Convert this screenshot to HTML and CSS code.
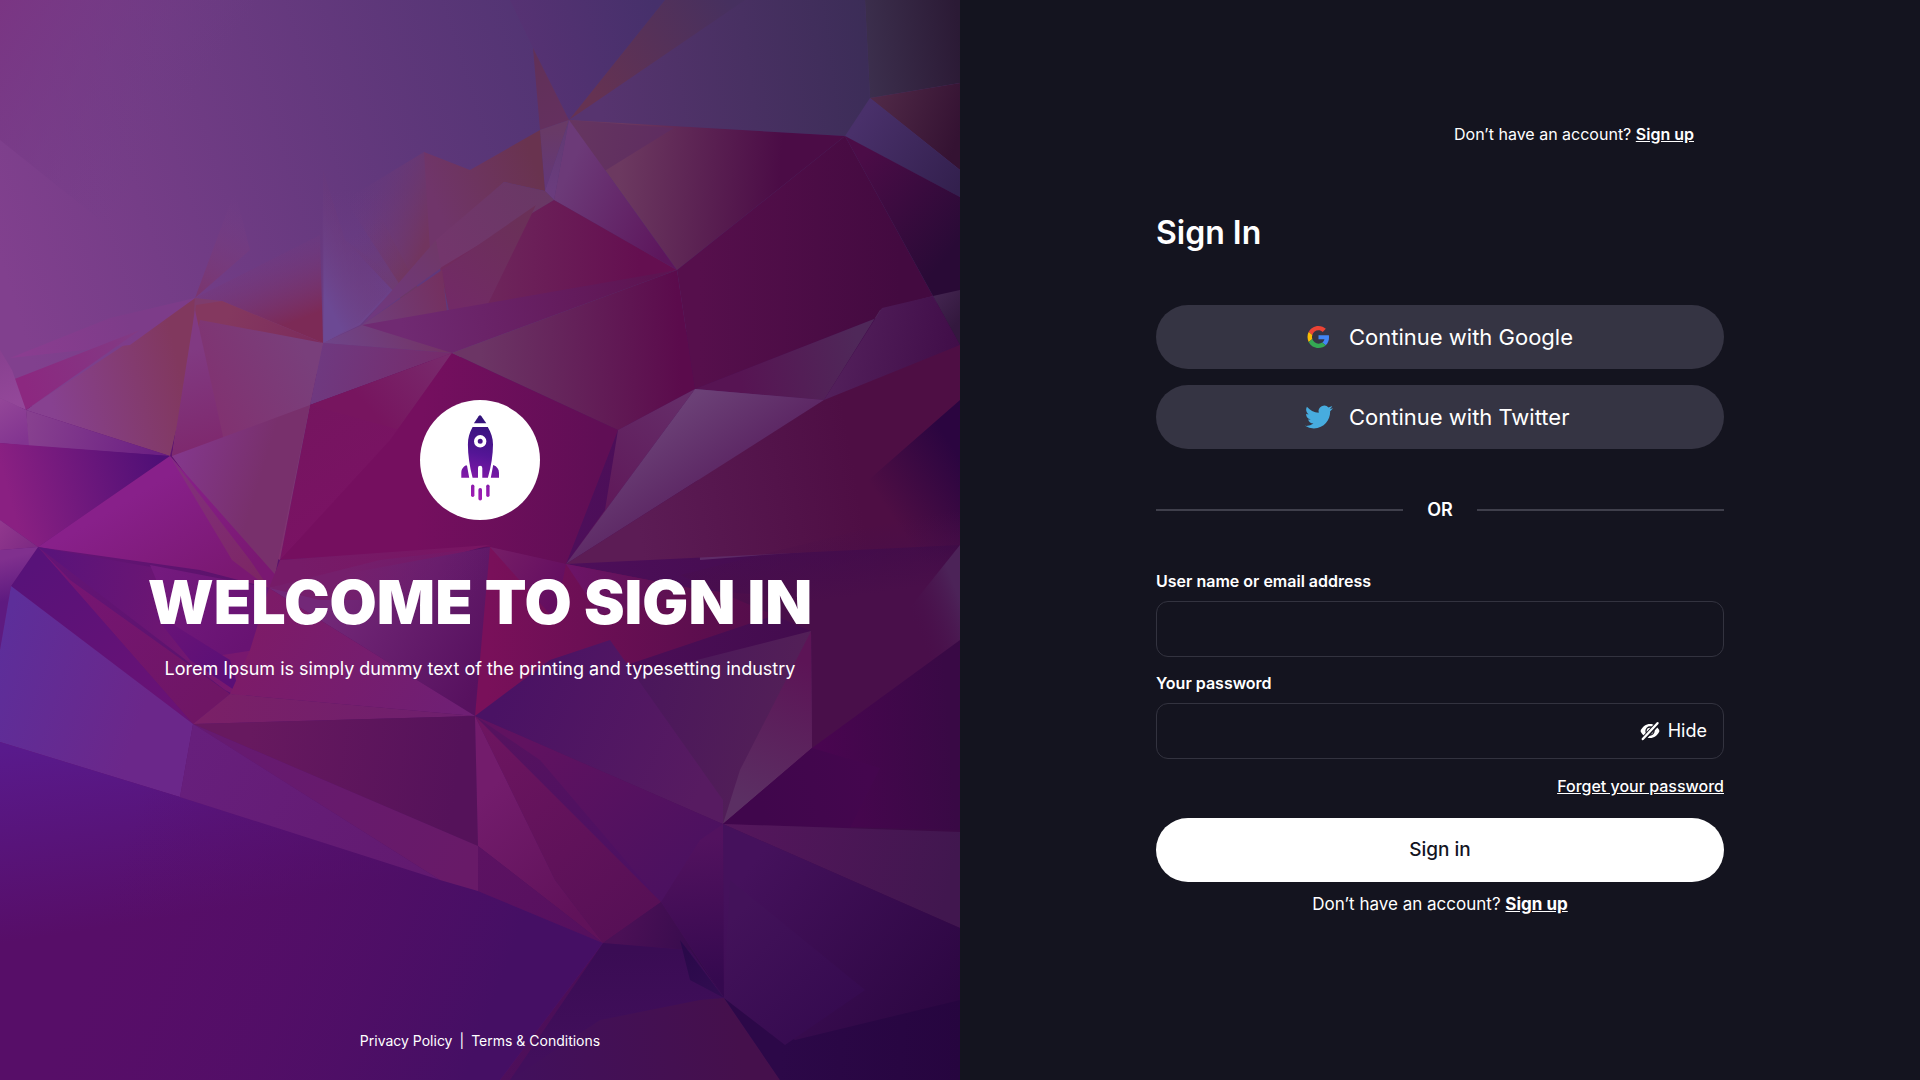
FILE: index.html
```html
<!DOCTYPE html>
<html lang="en">
<head>
  <meta charset="utf-8">
  <meta name="viewport" content="width=device-width, initial-scale=1">
  <title>Sign In</title>
  <link rel="stylesheet" href="styles.css">
</head>
<body>
  <div class="page">
    <section class="welcome">
      <svg class="backdrop" viewBox="0 0 960 1080" preserveAspectRatio="xMidYMid slice" aria-hidden="true"></svg>
      <div class="hero">
        <div class="logo">
          <svg viewBox="0 0 120 120" width="120" height="120" aria-hidden="true">
            <defs>
              <linearGradient id="rocket" gradientUnits="userSpaceOnUse" x1="66" y1="20" x2="50" y2="96">
                <stop offset="0" stop-color="#33127a"/>
                <stop offset=".45" stop-color="#541596"/>
                <stop offset="1" stop-color="#a01cb4"/>
              </linearGradient>
            </defs>
            <g fill="url(#rocket)">
              <path d="M58.600 16.200q1.400-1.800 2.800 0l4.900 7.100H53.900z"/>
              <path fill-rule="evenodd" d="M52.600 27h15.200c3.300 6 5.200 11 5.200 17.500 0 10-1.800 22-5.100 33.200H62.300V68q0-2.200-2.200-2.200T58 68v9.700h-5.400C49.600 66.500 47.900 55 47.900 44.500c0-6.500 1.500-11.500 4.700-17.500zM60.200 35.100a6.200 6.200 0 1 0 0 12.400 6.200 6.200 0 0 0 0-12.400zm0 3.700a2.500 2.500 0 1 1 0 5 2.500 2.500 0 0 1 0-5z"/>
              <path d="M47 65c-4 1.500-5.700 4.200-5.700 8v4.700h7.900L46.900 65zM73.200 65c4 1.500 5.800 4.200 5.800 8v4.700h-8.200z"/>
              <rect x="51" y="84.600" width="3.400" height="12.400" rx="1.700"/>
              <rect x="58.400" y="88" width="3.600" height="12.500" rx="1.800"/>
              <rect x="66.200" y="84.600" width="3.400" height="12.400" rx="1.700"/>
            </g>
          </svg>
        </div>
        <h1>WELCOME TO SIGN IN</h1>
        <p>Lorem Ipsum is simply dummy text of the printing and typesetting industry</p>
      </div>
      <footer class="legal">
        <a href="#privacy">Privacy Policy</a><span>|</span><a href="#terms">Terms &amp; Conditions</a>
      </footer>
    </section>

    <main class="panel">
      <form class="form">
        <p class="top-link">Don’t have an account? <a href="#signup">Sign up</a></p>
        <h2>Sign In</h2>

        <div class="social">
          <button type="button" class="social-button">
            <svg viewBox="0 0 28 28" width="28" height="28" aria-hidden="true">
              <g transform="translate(2.500 3) scale(.458)">
                <path fill="#ea4335" d="M24 9.500c3.540 0 6.710 1.220 9.210 3.600l6.850-6.850C35.900 2.380 30.470 0 24 0 14.620 0 6.510 5.380 2.560 13.220l7.980 6.190C12.430 13.720 17.740 9.500 24 9.500z"/>
                <path fill="#4285f4" d="M46.980 24.550c0-1.570-.15-3.090-.38-4.550H24v9.020h12.940c-.58 2.960-2.260 5.480-4.780 7.180l7.730 6c4.510-4.180 7.090-10.360 7.090-17.650z"/>
                <path fill="#fbbc05" d="M10.530 28.590c-.48-1.450-.76-2.990-.76-4.590s.27-3.140.76-4.590l-7.980-6.190C.92 16.460 0 20.120 0 24c0 3.880.92 7.540 2.560 10.780l7.970-6.190z"/>
                <path fill="#34a853" d="M24 48c6.480 0 11.930-2.130 15.890-5.810l-7.730-6c-2.150 1.450-4.920 2.300-8.160 2.300-6.260 0-11.570-4.220-13.470-9.910l-7.980 6.190C6.510 42.620 14.620 48 24 48z"/>
              </g>
            </svg>
            <span>Continue with Google</span>
          </button>
          <button type="button" class="social-button">
            <svg viewBox="0 0 24 24" width="28" height="28" aria-hidden="true">
              <path fill="#47acdf" d="M23.953 4.570a10 10 0 0 1-2.825.775 4.958 4.958 0 0 0 2.163-2.723c-.951.555-2.005.959-3.127 1.184a4.920 4.920 0 0 0-8.384 4.482C7.690 8.095 4.067 6.130 1.640 3.162a4.822 4.822 0 0 0-.666 2.475c0 1.710.870 3.213 2.188 4.096a4.904 4.904 0 0 1-2.228-.616v.060a4.923 4.923 0 0 0 3.946 4.827 4.996 4.996 0 0 1-2.212.085 4.936 4.936 0 0 0 4.604 3.417 9.867 9.867 0 0 1-6.102 2.105c-.39 0-.779-.023-1.170-.067a13.995 13.995 0 0 0 7.557 2.209c9.053 0 13.998-7.496 13.998-13.985 0-.210 0-.420-.015-.630A9.935 9.935 0 0 0 24 4.590z"/>
            </svg>
            <span>Continue with Twitter</span>
          </button>
        </div>

        <div class="divider"><span>OR</span></div>

        <label for="user">User name or email address</label>
        <input class="field" id="user" name="user" type="text" autocomplete="username">

        <label for="password">Your password</label>
        <div class="field field-group">
          <input id="password" name="password" type="password" autocomplete="current-password">
          <button type="button" class="toggle">
            <svg viewBox="0 0 20 20" width="20" height="20" aria-hidden="true">
              <path fill="#fff" d="M.5 10C2.500 5.200 6 3 10 3s7.500 2.200 9.500 7c-2 4.800-5.500 7-9.500 7S2.500 14.800.5 10z"/>
              <circle cx="10" cy="10" r="4" fill="none" stroke="#14141f" stroke-width="1.300"/>
              <path d="M2.500 18.800 18.300 2" stroke="#14141f" stroke-width="4.800"/>
              <path d="M2.800 18 17.500 2.200" stroke="#fff" stroke-width="2.400" stroke-linecap="round"/>
            </svg>
            Hide
          </button>
        </div>

        <a class="forgot" href="#forgot">Forget your password</a>
        <button type="submit" class="submit">Sign in</button>
        <p class="bottom-link">Don’t have an account? <a href="#signup">Sign up</a></p>
      </form>
    </main>
  </div>
  <script src="backdrop.js"></script>
</body>
</html>
```
FILE: styles.css
```css
* {
  box-sizing: border-box;
}

body {
  margin: 0;
  background: #14141f;
  color: #fff;
  font-family: Inter, "Open Sans", sans-serif;
  font-size: 16px;
  line-height: 24px;
}

h1,
h2,
p {
  margin: 0;
}

a {
  color: inherit;
}

button,
input {
  font: inherit;
  color: inherit;
}

button {
  border: 0;
  padding: 0;
  cursor: pointer;
}

.page {
  display: grid;
  grid-template-columns: 1fr 1fr;
  min-height: 100vh;
}

/* Left half */

.welcome {
  position: relative;
  isolation: isolate;
  overflow: hidden;
  display: grid;
  grid-template-rows: 1fr auto 1fr;
  justify-items: center;
  background: #5a1466;
}

.backdrop {
  position: absolute;
  inset: 0;
  z-index: -1;
  width: 100%;
  height: 100%;
}

.hero {
  grid-row: 2;
  display: flex;
  flex-direction: column;
  align-items: center;
  text-align: center;
}

.logo {
  width: 120px;
  height: 120px;
  margin-bottom: 46px;
  border-radius: 50%;
  background: #fff;
}

.logo svg {
  display: block;
}

.hero h1 {
  margin-bottom: 19px;
  font-size: 61px;
  font-weight: 900;
  line-height: 72px;
}

.hero p {
  font-size: 18px;
}

.legal {
  grid-row: 3;
  align-self: end;
  display: flex;
  gap: 7px;
  padding-bottom: 27px;
  font-size: 14px;
}

.legal a {
  text-decoration: none;
}

/* Right half */

.panel {
  padding: 122px 24px 48px;
}

.form {
  display: flex;
  flex-direction: column;
  max-width: 568px;
  margin: 0 auto;
}

.top-link {
  margin-bottom: 67px;
  padding-right: 30px;
  text-align: right;
}

.top-link a {
  font-weight: 600;
}

.form h2 {
  margin-bottom: 52px;
  font-size: 32px;
  font-weight: 600;
  line-height: 40px;
}

.social {
  display: grid;
  gap: 16px;
}

.social-button {
  display: flex;
  align-items: center;
  justify-content: center;
  gap: 16px;
  height: 64px;
  border-radius: 32px;
  background: #353443;
  font-size: 22px;
}

.social-button span {
  min-width: 226px;
  text-align: left;
}

.divider {
  display: flex;
  align-items: center;
  gap: 24px;
  margin: 49px 0 47px;
  font-size: 18px;
  font-weight: 600;
}

.divider::before,
.divider::after {
  content: "";
  flex: 1;
  height: 2px;
  background: #3f3f4b;
}

.form label {
  margin-bottom: 8px;
  font-weight: 600;
}

.field {
  width: 100%;
  height: 56px;
  border: 1px solid #33333f;
  border-radius: 12px;
  padding: 0 16px;
  background: transparent;
}

.field + label {
  margin-top: 14px;
}

.field-group {
  display: flex;
  align-items: center;
  gap: 16px;
}

.field-group input {
  flex: 1;
  min-width: 0;
  border: 0;
  padding: 0;
  background: transparent;
  outline: 0;
}

.toggle {
  display: flex;
  align-items: center;
  gap: 8px;
  background: transparent;
  font-size: 18px;
}

.forgot {
  align-self: flex-end;
  margin: 15px 0 20px;
  font-weight: 500;
}

.submit {
  height: 64px;
  margin-bottom: 10px;
  border-radius: 32px;
  background: #fff;
  color: #14141f;
  font-size: 19px;
  font-weight: 500;
}

.bottom-link {
  text-align: center;
  font-size: 17px;
}

.bottom-link a {
  font-weight: 700;
}
```
FILE: backdrop.js
```js
// Low-poly backdrop. Each facet: polygon points, then a gradient as
// start x, start y, colour, end x, end y, colour.
const facets = [
  ["0,0 960,0 960,420 0,420", 0, 260, "#81408e", 700, 40, "#46316c"],
  ["0,0 330,0 200,300 0,140", 0, 0, "#7a3583", 180, 120, "#703d8800"],
  ["0,410 960,300 960,1080 0,1080", 0, 600, "#661578", 960, 700, "#3c0a45"],
  ["510,0 665,0 569,120 533,48", 510, 60, "#583274", 660, 20, "#46306b"],
  ["665,0 760,0 569,120", 590, 90, "#653252", 730, 0, "#46305f"],
  ["745,0 865,0 870,98 960,197 845,136 569,120", 600, 100, "#57346f", 900, 60, "#392c55"],
  ["865,0 960,0 960,83 870,98", 865, 50, "#3c2f4d", 960, 40, "#2b1a35"],
  ["870,98 960,83 960,170", 870, 100, "#512a48", 960, 130, "#341232"],
  ["870,98 960,170 960,197 845,136", 860, 120, "#49306a", 960, 185, "#33204e"],
  ["533,48 569,120 540,130", 535, 60, "#613058", 560, 125, "#64305f"],
  ["545,191 569,120 540,130", 545, 130, "#683a66", 550, 190, "#63377a"],
  ["569,120 845,136 677,270", 620, 170, "#6c3960", 780, 180, "#4b0c46"],
  ["569,120 674,128 603,172", 575, 125, "#653560", 670, 140, "#5e2c60"],
  ["569,120 554,200 545,191", 569, 125, "#613a72", 550, 190, "#6a3c7d"],
  ["569,120 677,270 554,200", 560, 190, "#6c3a78", 670, 240, "#5d165c"],
  ["845,136 933,296 695,389 677,270", 700, 260, "#560f4c", 900, 260, "#430a40"],
  ["845,136 960,197 960,345 933,296", 860, 160, "#4b0c47", 960, 240, "#290a36"],
  ["933,296 960,290 960,345", 933, 296, "#432550", 960, 320, "#33183e"],
  ["695,389 933,296 880,310 824,400", 740, 380, "#571453", 860, 360, "#4f2859"],
  ["933,296 960,345 960,540 700,560 695,389 824,400 882,308", 740, 400, "#5f2c68", 950, 430, "#400d48"],
  ["322,150 424,152 436,245 360,325 323,343", 340, 190, "#6c3c8400", 340, 330, "#6e468e"],
  ["345,200 424,152 440,260 400,285", 350, 200, "#6e3c8000", 430, 230, "#71355f"],
  ["345,240 380,215 452,353", 350, 240, "#70386f00", 440, 330, "#72364c"],
  ["323,170 345,240 400,280 360,322 324,343", 326, 300, "#6c4994", 385, 270, "#6e357000"],
  ["424,152 470,170 540,130 545,191 504,182 430,250", 430, 190, "#70356a", 530, 150, "#69334f"],
  ["504,182 545,191 554,200 440,270 436,240", 440, 250, "#73366c", 550, 190, "#683864"],
  ["554,200 677,270 452,325 440,268", 440, 270, "#712d5f", 640, 270, "#640f50"],
  ["536,205 485,310 452,325 442,270", 450, 300, "#722a66", 520, 220, "#6a3058"],
  ["436,240 441,268 362,325", 370, 315, "#70387f", 440, 250, "#6f3868"],
  ["362,325 442,270 452,353 323,343", 330, 340, "#6f4488", 450, 300, "#74305f"],
  ["362,325 677,270 452,353", 400, 320, "#702a72", 650, 272, "#5d1452"],
  ["195,298 235,190 250,250", 200, 290, "#7a3670", 245, 200, "#76408800"],
  ["195,298 320,235 323,343 195,310", 255, 245, "#763c8400", 285, 325, "#7c2a56"],
  ["195,298 222,301 323,343 310,405 172,456", 200, 320, "#7e3c6c", 320, 400, "#793c80"],
  ["26,410 195,298 190,370 170,456", 50, 400, "#874190", 180, 370, "#81385e"],
  ["222,301 323,343 190,355 196,305", 230, 310, "#84385f", 320, 340, "#7c2b5c"],
  ["10,358 110,318 195,298 130,345", 20, 350, "#8a3d90", 130, 320, "#7d3c89"],
  ["12,380 140,330 26,410", 20, 372, "#8c2880", 140, 330, "#813b84"],
  ["0,350 12,370 26,410 0,398", 0, 350, "#87408f", 20, 400, "#934799"],
  ["0,398 26,410 30,446 0,443", 0, 400, "#934698", 26, 440, "#823490"],
  ["26,410 170,456 29,446", 30, 420, "#87408f", 165, 450, "#6a1e82"],
  ["0,443 170,456 38,547 0,520", 10, 500, "#8a2082", 160, 460, "#4f0f76"],
  ["0,520 38,547 0,550", 0, 520, "#92388e", 35, 547, "#7d2a83"],
  ["323,343 452,353 310,405", 320, 345, "#6f3980", 440, 370, "#752c6c"],
  ["452,353 410,440 280,560 310,405", 330, 380, "#75155f", 400, 500, "#7a1264"],
  ["452,353 310,405 400,430", 440, 350, "#782a6c", 370, 410, "#77155f"],
  ["323,343 310,405 280,560 240,540 172,456 200,320", 210, 440, "#82306f", 320, 380, "#793f7b"],
  ["195,310 215,400 250,560 172,456", 190, 350, "#813a82", 230, 480, "#7d2266"],
  ["310,405 272,590 235,540 172,456", 180, 456, "#83378a", 260, 480, "#78306c"],
  ["452,353 618,430 566,564 490,547 280,560 390,440", 420, 460, "#750f5f", 600, 470, "#600e55"],
  ["452,353 677,270 695,389 618,430", 480, 350, "#6c3565", 680, 340, "#5b0b4c"],
  ["695,389 566,564 605,510 618,430", 680, 400, "#652c68", 590, 530, "#5e1456"],
  ["695,389 824,400 566,564", 690, 400, "#6b4076", 760, 500, "#54195a"],
  ["824,400 960,345 960,545 566,564", 640, 540, "#5c1c55", 860, 500, "#4e0e44"],
  ["960,400 960,640 800,540", 955, 450, "#2b0540", 880, 500, "#2b054000"],
  ["170,456 280,580 269,588 200,570 38,547", 160, 480, "#88208a", 220, 580, "#7a1872"],
  ["170,456 250,560 269,588 232,560", 180, 470, "#82307c", 260, 580, "#7c2664"],
  ["280,560 490,545 400,570 269,588", 300, 580, "#761b68", 480, 550, "#781562"],
  ["269,588 490,547 490,560 475,716 320,620", 330, 600, "#732878", 480, 680, "#57115f"],
  ["269,588 380,560 490,547 486,600 320,600", 350, 560, "#751f6c", 470, 610, "#6a1c6c00"],
  ["38,547 269,588 245,700 225,690", 50, 550, "#5a137a", 250, 600, "#78186e"],
  ["150,565 269,588 255,650 190,660", 160, 570, "#741a7e", 250, 640, "#681372"],
  ["150,610 230,660 240,694 190,660", 150, 610, "#6c1478", 230, 680, "#5a0f76"],
  ["269,588 320,620 475,716 230,694 250,650", 270, 600, "#7d1b68", 460, 710, "#6f1f74"],
  ["38,547 70,580 230,694 193,724", 50, 560, "#761575", 200, 710, "#6f1665"],
  ["38,547 193,724 11,586", 40, 560, "#581279", 180, 710, "#6a1275"],
  ["0,550 38,547 11,586 0,650", 0, 560, "#80308e", 10, 600, "#5e1a80"],
  ["11,586 193,724 180,797 0,742 0,650", 0, 640, "#5d2e9a", 150, 690, "#6b278a"],
  ["0,742 180,797 478,891 603,943 500,1080 0,1080", 60, 740, "#591a8c", 90, 930, "#570e68"],
  ["0,742 180,797 478,891 603,943 500,1080 0,1080", 100, 900, "#560e6800", 480, 1040, "#450f64"],
  ["193,724 230,694 475,716", 200, 710, "#7a2067", 460, 712, "#6e1f6e"],
  ["193,724 475,716 478,846", 250, 730, "#67195f", 460, 760, "#55125a"],
  ["193,724 478,846 478,891 440,880", 230, 750, "#661a70", 470, 860, "#681a68"],
  ["193,724 440,880 180,797", 190, 740, "#671f7c", 420, 860, "#621a70"],
  ["490,547 566,564 700,590 820,600 475,716", 490, 600, "#79105a", 780, 610, "#520d4a"],
  ["490,547 566,564 555,620", 500, 550, "#741c66", 560, 590, "#640e60"],
  ["566,564 700,590 600,615", 570, 566, "#6c1467", 690, 590, "#5c104f"],
  ["811,631 680,575 900,520 960,500 960,680 812,748", 820, 530, "#480e4a00", 830, 600, "#490f4a"],
  ["475,716 811,631 812,748 723,824", 520, 710, "#45105f", 780, 780, "#532057"],
  ["475,716 550,660 610,640 723,800 723,824", 500, 700, "#4a1264", 700, 790, "#571b61"],
  ["811,631 812,748 723,824 740,770", 800, 660, "#5c1456", 740, 800, "#5b2f63"],
  ["475,716 723,824 724,998 661,902", 520, 750, "#601260", 680, 920, "#491160"],
  ["475,716 560,830 661,902 540,760", 490, 730, "#56125f", 650, 890, "#4c1062"],
  ["475,716 661,902 603,943 555,880", 480, 730, "#6d1560", 640, 920, "#571056"],
  ["475,716 555,880 603,943 478,846", 478, 800, "#731c6c", 580, 910, "#60125a"],
  ["478,846 603,943 478,891", 480, 850, "#5c1262", 590, 930, "#56105e"],
  ["960,545 960,700 900,620", 960, 600, "#4c2358", 910, 620, "#480e4a00"],
  ["812,748 960,640 960,830 723,824", 820, 750, "#490550", 950, 740, "#390945"],
  ["812,748 880,768 850,828 723,824", 760, 810, "#40064c", 870, 780, "#44064e"],
  ["723,824 960,832 960,928", 740, 828, "#54165c", 950, 880, "#41174f"],
  ["723,824 800,875 724,998", 725, 840, "#43105a", 760, 920, "#3b0d55"],
  ["723,824 960,928 960,1080 730,1080 724,998", 740, 880, "#45115c", 950, 1040, "#2a0640"],
  ["723,824 724,998 661,902 700,840", 700, 840, "#52125f", 720, 980, "#35094f"],
  ["661,902 724,998 690,950 603,943", 620, 930, "#4b1056", 720, 960, "#300a4a"],
  ["603,943 690,950 724,998 700,1010 510,1080", 600, 950, "#3a0c54", 600, 1060, "#420f5c"],
  ["700,1000 724,998 780,1080 510,1080 600,1020", 520, 1080, "#42105c", 740, 1040, "#45104c"],
  ["724,998 690,980 680,940", 690, 950, "#2a094a", 720, 990, "#310c50"],
  ["724,998 795,1040 960,1000 960,1080 780,1080", 780, 1060, "#2c0848", 960, 1070, "#26053f"],
  ["724,998 730,880 865,990 785,1045", 730, 920, "#43125a", 830, 1020, "#360b50"]
];

const NS = "http://www.w3.org/2000/svg";
const backdrop = document.querySelector(".backdrop");

function add(parent, name, attributes) {
  const node = document.createElementNS(NS, name);
  for (const key in attributes) node.setAttribute(key, attributes[key]);
  return parent.appendChild(node);
}

facets.forEach(([points, x1, y1, from, x2, y2, to], i) => {
  const gradient = add(backdrop, "linearGradient", { id: "facet" + i, gradientUnits: "userSpaceOnUse", x1, y1, x2, y2 });
  add(gradient, "stop", { offset: 0, "stop-color": from });
  add(gradient, "stop", { offset: 1, "stop-color": to });
  add(backdrop, "polygon", { points, fill: `url(#facet${i})` });
});
```
